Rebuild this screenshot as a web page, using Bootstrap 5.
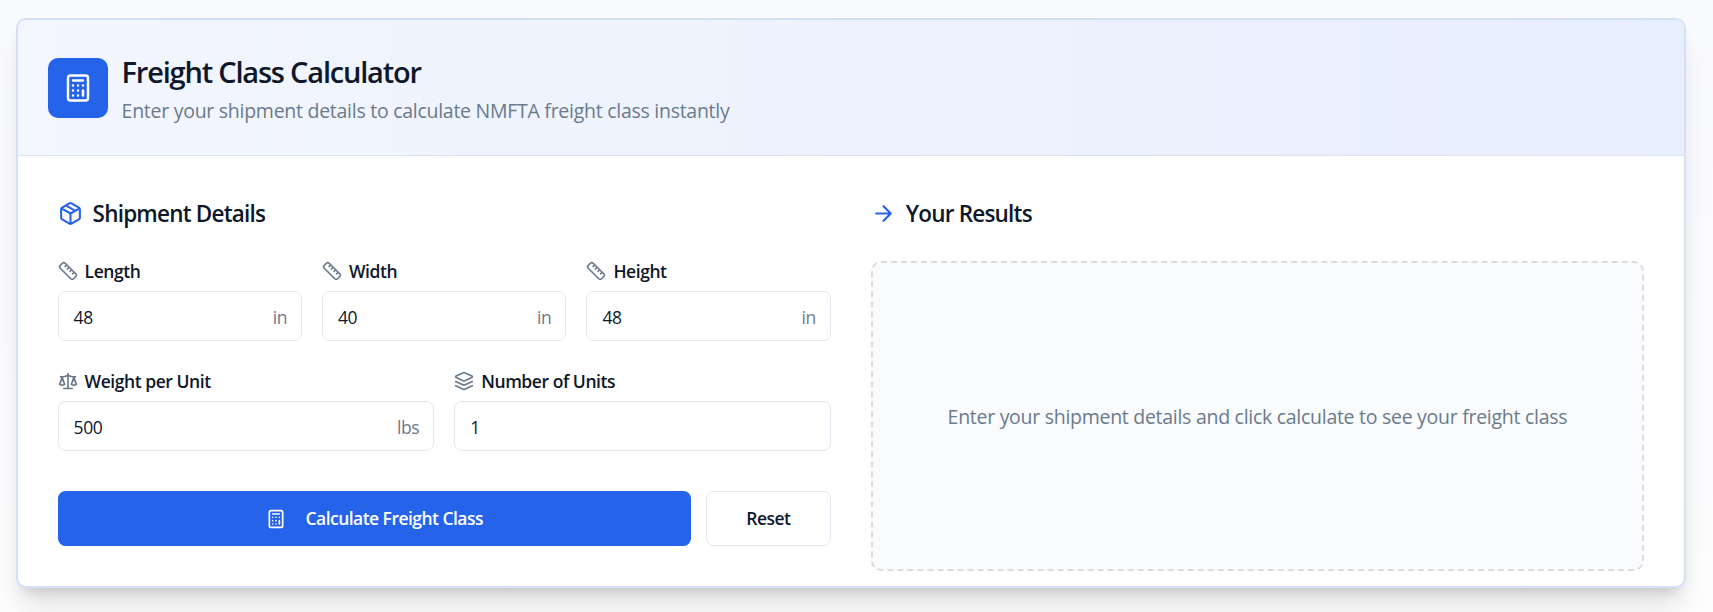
<!DOCTYPE html>
<html lang="en">
<head>
<meta charset="utf-8">
<meta name="viewport" content="width=device-width, initial-scale=1">
<title>Freight Class Calculator</title>
<link rel="stylesheet" href="https://cdn.jsdelivr.net/npm/bootstrap@5.3.0/dist/css/bootstrap.min.css">
<style>
  :root { --ink:#0f172a; --soft:#6b7a8c; --brand:#2563eb; --line:#e2e8f0; }
  body { font-family:"Open Sans","Noto Sans",sans-serif; color:var(--ink); background:linear-gradient(#f9fafe,#fdfdfe); height:612px; overflow:hidden; font-size:17.5px; line-height:25px; }
  svg { fill:none; stroke:currentColor; stroke-width:2; stroke-linecap:round; stroke-linejoin:round; flex:none; }
  .calc-card { margin:18px 27px 0 15.6px; height:570px; border:2px solid #d5e0f7; border-radius:10px; overflow:hidden;
    box-shadow:0 25px 31px -6px rgba(0,0,0,.1),0 10px 13px -7px rgba(0,0,0,.16); }
  .calc-head { height:136px; padding:0 30px; gap:14px; background:linear-gradient(90deg,#f3f6fe,#e7eefd); border-bottom:1px solid #dbe4f2; }
  .tile { width:60px; height:60px; border-radius:10px; background:var(--brand); }
  .calc-title { font-size:29px; line-height:38px; font-weight:600; letter-spacing:-1.2px; margin:3px 0 5px; }
  .calc-sub { font-size:19.5px; line-height:30px; letter-spacing:-.27px; color:var(--soft); margin:0; }
  .calc-body { padding:40px 40px 0; gap:40px; }
  .pane { flex:1 1 0; min-width:0; }
  .pane-title { font-size:22.5px; line-height:35px; font-weight:600; letter-spacing:-.8px; gap:10px; margin:0 0 30px; }
  .pane-title svg { color:var(--brand); }
  .field-row { gap:20px; }
  .field-row.second { margin:30px 0 40px; }
  .field-label { font-weight:600; letter-spacing:-.45px; gap:7px; height:20px; margin-bottom:10px; }
  .field-label svg { color:var(--soft); }
  .field-box { height:50px; padding:2px 14px 0 15px; border:1px solid var(--line); border-radius:7.5px; letter-spacing:-.4px; background:#fff; }
  .unit { color:var(--soft); }
  .actions { gap:15px; }
  .action { height:55px; border-radius:7.5px; font-size:17.5px; font-weight:600; letter-spacing:-.54px; }
  .action.go { background:var(--brand); color:#fff; gap:20px; }
  .action.reset { width:125px; border:1px solid var(--line); background:#fff; color:var(--ink); }
  .empty { height:310px; border:2px dashed #d9dde2; border-radius:10px; background:#f9fbfd; color:var(--soft); font-size:19.5px; letter-spacing:-.28px; }
</style>
</head>
<body>
<svg class="d-none">
  <symbol id="calc" viewBox="0 0 24 24"><rect x="4" y="2" width="16" height="20" rx="2"/><path d="M8 6h8M16 14v4M16 10h.01M12 10h.01M8 10h.01M12 14h.01M8 14h.01M12 18h.01M8 18h.01"/></symbol>
  <symbol id="ruler" viewBox="0 0 24 24"><path d="M21.3 15.3a2.4 2.4 0 0 1 0 3.4l-2.6 2.6a2.4 2.4 0 0 1-3.4 0L2.7 8.7a2.41 2.41 0 0 1 0-3.4l2.6-2.6a2.41 2.41 0 0 1 3.4 0ZM14.5 12.5l2-2M11.5 9.5l2-2M8.5 6.5l2-2M17.5 15.5l2-2"/></symbol>
</svg>
<main class="calc-card bg-white">
  <header class="calc-head d-flex align-items-center">
    <div class="tile d-flex align-items-center justify-content-center text-white"><svg width="30" height="30"><use href="#calc"/></svg></div>
    <div>
      <h1 class="calc-title">Freight Class Calculator</h1>
      <p class="calc-sub">Enter your shipment details to calculate NMFTA freight class instantly</p>
    </div>
  </header>
  <div class="calc-body d-flex">
    <section class="pane">
      <h2 class="pane-title d-flex align-items-center"><svg width="25" height="25" viewBox="0 0 24 24"><path d="m7.5 4.27 9 5.15M21 8a2 2 0 0 0-1-1.73l-7-4a2 2 0 0 0-2 0l-7 4A2 2 0 0 0 3 8v8a2 2 0 0 0 1 1.73l7 4a2 2 0 0 0 2 0l7-4A2 2 0 0 0 21 16ZM3.3 7l8.7 5 8.7-5M12 22V12"/></svg><span>Shipment Details</span></h2>
      <div class="field-row d-flex">
        <div class="pane">
          <div class="field-label d-flex align-items-center"><svg width="20" height="20"><use href="#ruler"/></svg><span>Length</span></div>
          <div class="field-box d-flex align-items-center justify-content-between"><span>48</span><span class="unit">in</span></div>
        </div>
        <div class="pane">
          <div class="field-label d-flex align-items-center"><svg width="20" height="20"><use href="#ruler"/></svg><span>Width</span></div>
          <div class="field-box d-flex align-items-center justify-content-between"><span>40</span><span class="unit">in</span></div>
        </div>
        <div class="pane">
          <div class="field-label d-flex align-items-center"><svg width="20" height="20"><use href="#ruler"/></svg><span>Height</span></div>
          <div class="field-box d-flex align-items-center justify-content-between"><span>48</span><span class="unit">in</span></div>
        </div>
      </div>
      <div class="field-row second d-flex">
        <div class="pane">
          <div class="field-label d-flex align-items-center"><svg width="20" height="20" viewBox="0 0 24 24"><path d="m16 16 3-8 3 8c-.87.65-1.92 1-3 1s-2.13-.35-3-1ZM2 16l3-8 3 8c-.87.65-1.92 1-3 1s-2.13-.35-3-1ZM7 21h10M12 3v18M3 7h2c2 0 5-1 7-2 2 1 5 2 7 2h2"/></svg><span>Weight per Unit</span></div>
          <div class="field-box d-flex align-items-center justify-content-between"><span>500</span><span class="unit">lbs</span></div>
        </div>
        <div class="pane">
          <div class="field-label d-flex align-items-center"><svg width="20" height="20" viewBox="0 0 24 24"><path d="m12.83 2.18a2 2 0 0 0-1.66 0L2.6 6.08a1 1 0 0 0 0 1.83l8.58 3.91a2 2 0 0 0 1.66 0l8.58-3.9a1 1 0 0 0 0-1.83ZM22 17.65l-9.17 4.16a2 2 0 0 1-1.66 0L2 17.65M22 12.65l-9.17 4.16a2 2 0 0 1-1.66 0L2 12.65"/></svg><span>Number of Units</span></div>
          <div class="field-box d-flex align-items-center"><span>1</span></div>
        </div>
      </div>
      <div class="actions d-flex">
        <button class="action go btn flex-grow-1 d-flex align-items-center justify-content-center"><svg width="20" height="20"><use href="#calc"/></svg><span>Calculate Freight Class</span></button>
        <button class="action reset btn">Reset</button>
      </div>
    </section>
    <section class="pane">
      <h2 class="pane-title d-flex align-items-center"><svg width="25" height="25" viewBox="0 0 24 24"><path d="M5 12h14M12 5l7 7-7 7"/></svg><span>Your Results</span></h2>
      <div class="empty d-flex align-items-center justify-content-center"><span>Enter your shipment details and click calculate to see your freight class</span></div>
    </section>
  </div>
</main>
<script src="https://cdn.jsdelivr.net/npm/bootstrap@5.3.0/dist/js/bootstrap.bundle.min.js"></script>
</body>
</html>
